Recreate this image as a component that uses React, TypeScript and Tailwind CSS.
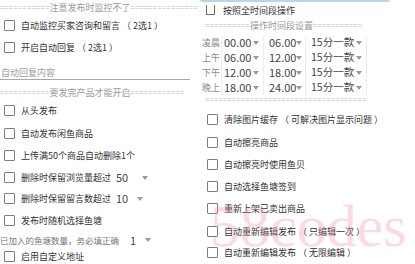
import React from "react";

const Arrow = () => (
  <span className="inline-block w-0 h-0 border-l-[3px] border-r-[3px] border-t-[4px] border-l-transparent border-r-transparent border-t-[#9a9a9a]" />
);

const Box = () => (
  <span className="w-[11px] h-[11px] shrink-0 border border-[#7c7c7c] rounded-[1px] bg-white" />
);

// row of "=" signs with an optional title in the middle
const Rule = ({ title, left, right }: { title?: string; left: number; right: number }) => (
  <div className="flex items-center h-full whitespace-nowrap leading-none">
    <span className="text-[7px] tracking-[0.4px] text-[#b8b8b8] font-[family-name:'Liberation_Sans',sans-serif]">{"=".repeat(left)}</span>
    {title && <span className="text-[9px] text-[#9a9a9a]">{title}</span>}
    <span className="text-[7px] tracking-[0.4px] text-[#b8b8b8] font-[family-name:'Liberation_Sans',sans-serif]">{"=".repeat(right)}</span>
  </div>
);

// full-width brackets get a bit of room, like the phone font
const Label = ({ text }: { text: string }) => (
  <>
    {text.split(/([（）])/).map((part, i) =>
      part === "（" || part === "）" ? (
        <span key={i} className="px-[2px]">{part}</span>
      ) : (
        <React.Fragment key={i}>{part}</React.Fragment>
      )
    )}
  </>
);

interface Row {
  label: string;
  h: string;
  num?: string;
  numW?: string;
}

const leftTop: Row[] = [
  { label: "自动监控买家咨询和留言（2选1）", h: "h-[22px]" },
  { label: "开启自动回复（2选1）", h: "h-[23px]" },
];

const leftMid: Row[] = [
  { label: "从头发布", h: "h-[23px]" },
  { label: "自动发布闲鱼商品", h: "h-[22px]" },
  { label: "上传满50个商品自动删除1个", h: "h-[23px]" },
  { label: "删除时保留浏览量超过", h: "h-[21px]", num: "50", numW: "w-[32px]" },
  { label: "删除时保留留言数超过", h: "h-[21px]", num: "10", numW: "w-[27px]" },
  { label: "发布时随机选择鱼塘", h: "h-[22px]" },
];

const rightRows: Row[] = [
  { label: "清除图片缓存（可解决图片显示问题）", h: "h-[24px]" },
  { label: "自动擦亮商品", h: "h-[23px]" },
  { label: "自动擦亮时使用鱼贝", h: "h-[21px]" },
  { label: "自动选择鱼塘签到", h: "h-[22px]" },
  { label: "重新上架已卖出商品", h: "h-[23px]" },
  { label: "自动重新编辑发布（只编辑一次）", h: "h-[22px]" },
  { label: "自动重新编辑发布（无限编辑）", h: "h-[21px]" },
];

const times = [
  { name: "凌晨", from: "00.00", to: "06.00" },
  { name: "上午", from: "06.00", to: "12.00" },
  { name: "下午", from: "12.00", to: "18.00" },
  { name: "晚上", from: "18.00", to: "24.00" },
];

const CheckRow = ({ row, pad }: { row: Row; pad: string }) => (
  <div className={`flex items-center ${row.h} ${pad}`}>
    <Box />
    <span className="ml-[6px] text-[9px] text-[#333] leading-none whitespace-nowrap">
      <Label text={row.label} />
    </span>
    {row.num && (
      <span className={`ml-[5px] flex items-center justify-between ${row.numW}`}>
        <span className="text-[11px] text-[#444] leading-none">{row.num}</span>
        <Arrow />
      </span>
    )}
  </div>
);

export default function App() {
  return (
    <div className="relative w-[415px] h-[264px] overflow-hidden bg-white flex font-[family-name:'Noto_Sans_CJK_SC',sans-serif]">
      <div className="w-[200px] shrink-0 flex flex-col">
        <div className="h-[14px]">
          <Rule title="注意发布时监控不了" left={11} right={15} />
        </div>
        {leftTop.map((r) => (
          <CheckRow key={r.label} row={r} pad="pl-[4px]" />
        ))}
        <div className="h-[21px] mr-[10px] border-b border-[#a8a8a8] flex items-end pb-[2px] pl-[1px]">
          <span className="text-[9px] text-[#a0a0a0] leading-none">自动回复内容</span>
        </div>
        <div className="h-[14px] mt-[5px]">
          <Rule title="要发完产品才能开启" left={11} right={12} />
        </div>
        {leftMid.map((r) => (
          <CheckRow key={r.label} row={r} pad="pl-[4px]" />
        ))}
        <div className="h-[18px] flex items-center whitespace-nowrap">
          <span className="text-[8.5px] text-[#777] leading-none">已加入的鱼塘数量，务必填正确</span>
          <span className="ml-[11px] flex items-center justify-between w-[21px]">
            <span className="text-[11px] text-[#444] leading-none">1</span>
            <Arrow />
          </span>
        </div>
        <CheckRow row={{ label: "启用自定义地址", h: "h-[15px]" }} pad="pl-[4px]" />
      </div>

      <div className="flex-1 flex flex-col">
        <div className="h-[2px] w-[190px] bg-[#b9d7ec] rounded-b-[2px]" />
        <div className="h-[17px] flex items-center pl-[6px]">
          <span className="w-[9px] h-[10px] mt-[-2px] border-l border-r border-b border-[#6f6f6f]" />
          <span className="ml-[8px] text-[9px] text-[#333] leading-none">按照全时间段操作</span>
        </div>
        <div className="h-[12px] pl-[5px]">
          <Rule title="操作时间段设置" left={10} right={11} />
        </div>
        <div className="mt-[4px] flex flex-col">
          {times.map((t) => (
            <div key={t.name} className="h-[15px] flex items-center">
              <span className="w-[21px] pl-[2px] text-[9px] text-[#8a8a8a] leading-none">{t.name}</span>
              <div className="h-full w-[42px] border-l border-[#ececec] flex items-center justify-between pl-[2px] pr-[4px]">
                <span className="text-[11px] text-[#444] leading-none">{t.from}</span>
                <Arrow />
              </div>
              <div className="h-full w-[42px] border-l border-[#ececec] flex items-center justify-between pl-[5px] pr-[3px]">
                <span className="text-[11px] text-[#444] leading-none">{t.to}</span>
                <Arrow />
              </div>
              <div className="h-full w-[62px] border-l border-r border-[#ececec] flex items-center justify-between pl-[5px] pr-[4px]">
                <span className="text-[10.5px] text-[#444] leading-none">15分一款</span>
                <Arrow />
              </div>
            </div>
          ))}
        </div>
        <div className="h-[8px] pl-[5px]">
          <Rule left={36} right={0} />
        </div>
        <div className="mt-[4px] flex flex-col">
          {rightRows.map((r) => (
            <CheckRow key={r.label} row={r} pad="pl-[7px]" />
          ))}
        </div>
      </div>

      <div className="absolute left-[210px] top-[196px] text-[60px] leading-none text-[#ee9aaa] opacity-35 font-[family-name:'Liberation_Serif',serif] pointer-events-none select-none">
        58codes
      </div>
    </div>
  );
}
